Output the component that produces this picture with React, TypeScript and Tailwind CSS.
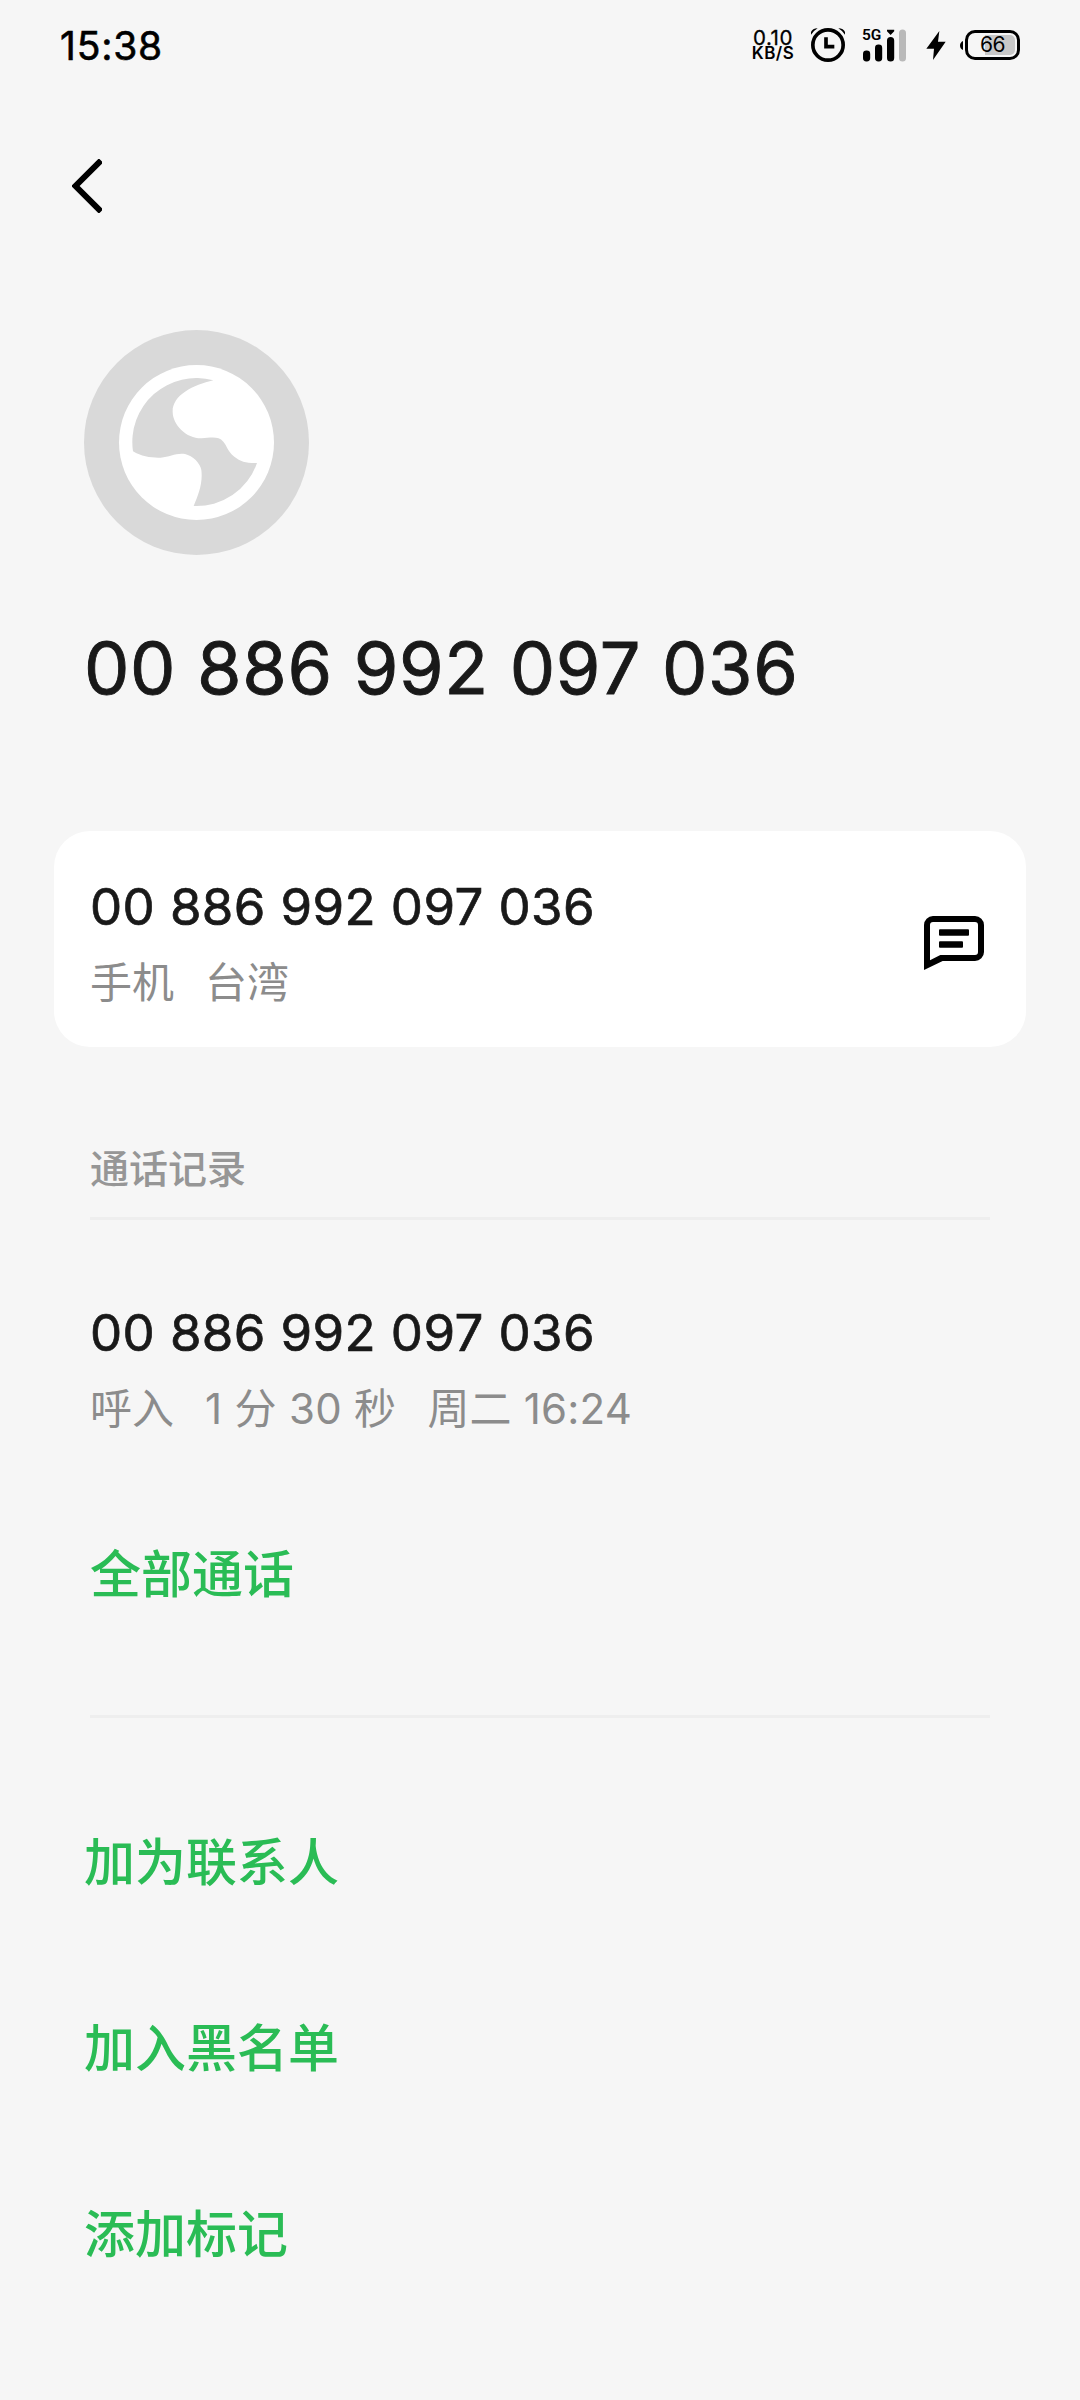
import type { ReactNode } from 'react';

const PHONE_NUMBER = '00 886 992 097 036';

const actions = ['加为联系人', '加入黑名单', '添加标记'];

const StatusBar = () => (
  <header className="flex h-[90px] items-center justify-between pr-[60px] pl-[60px] text-black">
    <time className="pt-[2px] text-[39px] leading-[48px] tracking-[0.8px] [-webkit-text-stroke:0.6px]">15:38</time>
    <div className="flex items-center">
      <div className="flex w-[42px] flex-col items-center">
        <span className="text-[20.5px] leading-[15px] tracking-[0.5px] [-webkit-text-stroke:0.3px]">0.10</span>
        <span className="mt-[1px] text-[17px] leading-[15px] font-semibold tracking-[0.5px]">KB/S</span>
      </div>
      <svg className="ml-[17px] h-[35px] w-[34px]" viewBox="243 54 102 105">
        <circle cx="294" cy="105" r="45.5" fill="none" stroke="currentColor" strokeWidth="11" />
        <path d="M288 82v28h25" fill="none" stroke="currentColor" strokeWidth="11" />
        <path d="M243 74v-8q4-10 20-11Q250 63 243 74ZM345 74v-8q-4-10-20-11Q338 63 345 74Z" />
      </svg>
      <div className="relative ml-[18px] h-[33px] w-[43px]">
        <svg className="h-full w-full" viewBox="0 0 43 33">
          <rect x="0" y="21.5" width="7.2" height="11" rx="3.4" />
          <rect x="12" y="15.5" width="7.2" height="17" rx="3.4" />
          <path d="M24 11.5a3.6 3.6 0 0 1 7.2 0V29a3.6 3.6 0 0 1-7.2 0ZM24 .7h7.2v1.6L27.6 6 24 2.300Z" />
          <rect x="36" y=".5" width="7" height="32" rx="3.5" fill="#b9b9b9" />
        </svg>
        <span className="absolute top-0 left-[-1px] font-['Roboto'] text-[15.5px] leading-[13px] font-semibold">5G</span>
      </div>
      <svg className="ml-[20px] h-[29px] w-[20px]" viewBox="590 62 58 87">
        <path d="M629 62L590 115H613L610 149L648 94H625Z" />
      </svg>
      <div className="ml-[14px] flex items-center">
        <svg className="mr-[2px] h-[9px] w-[3px]" viewBox="0 0 3 9">
          <path d="M3 0v9C1 8 0 6.500 0 4.500S1 1 3 0Z" />
        </svg>
        <div className="relative flex h-[30px] w-[55px] items-center justify-center rounded-[10px] border-3 border-black">
          <span className="absolute top-[2px] right-[2px] h-[20px] w-[30px] rounded-r-[5px] bg-[#c8c8c8]" />
          <span className="relative text-[21px] leading-[24px] tracking-[-0.4px]">66</span>
        </div>
      </div>
    </div>
  </header>
);

const Avatar = () => (
  <svg className="h-[225px] w-[225px]" viewBox="42 60 675 675">
    <circle cx="379.5" cy="397.5" r="337.5" fill="#d9d9d9" />
    <circle cx="379.5" cy="397.5" r="232.5" fill="#fff" />
    <path
      fill="#d9d9d9"
      d="M430 211A192 192 0 0 0 189 424C215 440 246 444 272 443C300 441 318 428 345 432C368 437 391 460 394 480C399 520 385 555 371 588A192 192 0 0 0 561 459C530 460 512 455 493 440C470 421 472 408 460 395C445 377 420 384 395 385C350 386 308 345 308 305C308 255 370 225 430 211Z"
    />
  </svg>
);

const MessageIcon = () => (
  <svg className="h-[54px] w-[60px]" viewBox="132 288 180 162">
    <path
      fillRule="evenodd"
      d="M159 288H285A27 27 0 0 1 312 315V396A27 27 0 0 1 285 423H188L132 450V315A27 27 0 0 1 159 288ZM159 306A9 9 0 0 0 150 315V421L181 405H285A9 9 0 0 0 294 396V315A9 9 0 0 0 285 306Z"
    />
    <rect x="177" y="328" width="90" height="19" rx="3" />
    <rect x="177" y="364" width="72" height="19" rx="3" />
  </svg>
);

const NumberInfo = ({ children }: { children: ReactNode }) => (
  <div>
    <div className="text-[51px] leading-[62px] tracking-[0.4px] [-webkit-text-stroke:0.7px]">{PHONE_NUMBER}</div>
    <div className="mt-[17px] flex gap-[31px] text-[42px] leading-[56px] text-[#8c8c8c]">{children}</div>
  </div>
);

export default function App() {
  return (
    <div className="h-[2400px] w-[1080px] overflow-hidden bg-[#f6f6f6] font-['Inter','Noto_Sans_CJK_SC',sans-serif] text-[#191919]">
      <StatusBar />

      <nav className="flex h-[192px] items-center pl-[72px]">
        <button aria-label="返回">
          <svg className="h-[54px] w-[30px]" viewBox="0 0 30 54" fill="none" stroke="#000" strokeWidth="6">
            <path d="M29 1.500L3.500 27L29 52.500" />
          </svg>
        </button>
      </nav>

      <section className="mt-[48px] pl-[84px]">
        <Avatar />
        <h1 className="mt-[69px] text-[72px] leading-[88px] tracking-[0.65px] [-webkit-text-stroke:0.9px]">
          {PHONE_NUMBER}
        </h1>
      </section>

      <section className="mx-[54px] mt-[119px] flex h-[216px] items-start justify-between rounded-[36px] bg-white pt-[45px] pr-[42px] pl-[36px]">
        <NumberInfo>
          <span>手机</span>
          <span>台湾</span>
        </NumberInfo>
        <button className="mt-[40px]" aria-label="短信">
          <MessageIcon />
        </button>
      </section>

      <section className="mx-[90px] border-b-3 border-[#eee] pt-[97px]">
        <h2 className="border-b-3 border-[#eee] pb-[23px] text-[39px] leading-[50px] font-medium text-[#969696]">
          通话记录
        </h2>
        <div className="mt-[82px]">
          <NumberInfo>
            <span>呼入</span>
            <span className="tracking-[0.3px]">1 分 30 秒</span>
            <span className="tracking-[0.2px]">周二 16:24</span>
          </NumberInfo>
        </div>
        <button className="mt-[101px] mb-[103px] block text-[51px] leading-[74px] font-medium text-[#2abc55]">
          全部通话
        </button>
      </section>

      <ul className="mt-[52px] pl-[84px] text-[51px] font-medium text-[#2abc55]">
        {actions.map((action) => (
          <li key={action} className="h-[186px] leading-[186px]">
            {action}
          </li>
        ))}
      </ul>
    </div>
  );
}
